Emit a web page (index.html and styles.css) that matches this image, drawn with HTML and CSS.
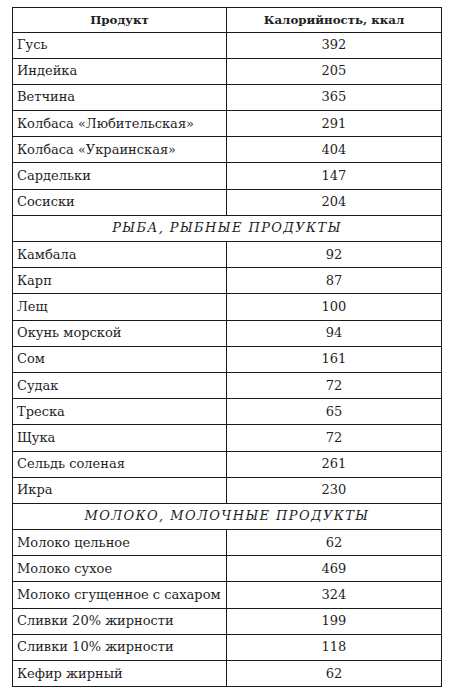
FILE: index.html
```html
<!DOCTYPE html>
<html lang="ru">
<head>
<meta charset="utf-8">
<link rel="stylesheet" href="styles.css">
</head>
<body>
<table class="tbl">
  <colgroup><col class="c1"><col class="c2"></colgroup>
  <thead>
    <tr class="head"><th>Продукт</th><th>Калорийность, ккал</th></tr>
  </thead>
  <tbody>
    <tr><td>Гусь</td><td class="num">392</td></tr>
    <tr><td>Индейка</td><td class="num">205</td></tr>
    <tr><td>Ветчина</td><td class="num">365</td></tr>
    <tr><td>Колбаса «Любительская»</td><td class="num">291</td></tr>
    <tr><td>Колбаса «Украинская»</td><td class="num">404</td></tr>
    <tr><td>Сардельки</td><td class="num">147</td></tr>
    <tr><td>Сосиски</td><td class="num">204</td></tr>
    <tr class="sec"><td colspan="2">РЫБА, РЫБНЫЕ ПРОДУКТЫ</td></tr>
    <tr><td>Камбала</td><td class="num">92</td></tr>
    <tr><td>Карп</td><td class="num">87</td></tr>
    <tr><td>Лещ</td><td class="num">100</td></tr>
    <tr><td>Окунь морской</td><td class="num">94</td></tr>
    <tr><td>Сом</td><td class="num">161</td></tr>
    <tr><td>Судак</td><td class="num">72</td></tr>
    <tr><td>Треска</td><td class="num">65</td></tr>
    <tr><td>Щука</td><td class="num">72</td></tr>
    <tr><td>Сельдь соленая</td><td class="num">261</td></tr>
    <tr><td>Икра</td><td class="num">230</td></tr>
    <tr class="sec"><td colspan="2">МОЛОКО, МОЛОЧНЫЕ ПРОДУКТЫ</td></tr>
    <tr><td>Молоко цельное</td><td class="num">62</td></tr>
    <tr><td>Молоко сухое</td><td class="num">469</td></tr>
    <tr><td>Молоко сгущенное с сахаром</td><td class="num">324</td></tr>
    <tr><td>Сливки 20% жирности</td><td class="num">199</td></tr>
    <tr><td>Сливки 10% жирности</td><td class="num">118</td></tr>
    <tr><td>Кефир жирный</td><td class="num">62</td></tr>
  </tbody>
</table>
</body>
</html>
```
FILE: styles.css
```css
html, body {
  margin: 0;
  padding: 0;
  background: #ffffff;
}
body {
  padding: 7px 0 0 12px;
  font-family: "DejaVu Serif", "Liberation Serif", serif;
  color: #1f1f1f;
}
.tbl {
  border-collapse: collapse;
  width: 430px;
  table-layout: fixed;
  font-size: 13px;
}
.c1 { width: 214px; }
.tbl th, .tbl td {
  border: 1.5px solid #1a1a1a;
  padding: 0 0 0 4px;
  height: 25.2px;
  line-height: 16px;
  vertical-align: middle;
  white-space: nowrap;
}
.head th {
  height: 23.5px;
  font-size: 11.8px;
  font-weight: bold;
  text-align: center;
  padding: 0;
}
.tbl td.num {
  text-align: center;
  padding: 0;
}
.sec td {
  text-align: center;
  font-style: italic;
  letter-spacing: 1.4px;
  padding: 0;
}
```
